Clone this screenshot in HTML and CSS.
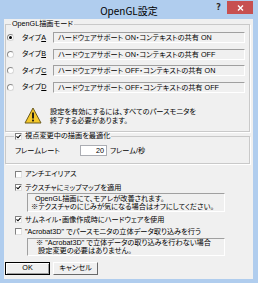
FILE: index.html
```html
<!DOCTYPE html>
<html lang="ja">
<head>
<meta charset="utf-8">
<title>OpenGL設定</title>
<link rel="stylesheet" href="styles.css">
</head>
<body>
<div class="window">
  <div class="titlebar">
    <div class="title">OpenGL設定</div>
    <div class="caption-btns"><span class="help">?</span><span class="close"><svg width="7" height="6" viewBox="0 0 7 6"><path d="M1 0.5 L6 5.5 M6 0.5 L1 5.5" stroke="#fff" stroke-width="1.4"/></svg></span></div>
  </div>
  <div class="client">
    <fieldset class="group mode-group">
      <legend>OpenGL描画モード</legend>
      <div class="modes">
        <div class="mode-row"><span class="radio on"></span><span class="mode-label">タイプ<u>A</u></span><span class="ro-box">ハードウェアサポート ON・コンテキストの共有 ON</span></div>
        <div class="mode-row"><span class="radio"></span><span class="mode-label">タイプ<u>B</u></span><span class="ro-box">ハードウェアサポート ON・コンテキストの共有 OFF</span></div>
        <div class="mode-row"><span class="radio"></span><span class="mode-label">タイプ<u>C</u></span><span class="ro-box">ハードウェアサポート OFF・コンテキストの共有 ON</span></div>
        <div class="mode-row"><span class="radio"></span><span class="mode-label">タイプ<u>D</u></span><span class="ro-box">ハードウェアサポート OFF・コンテキストの共有 OFF</span></div>
      </div>
      <div class="warn">
        <svg class="warn-icon" width="18" height="17" viewBox="0 0 18 17"><path d="M9 1 L17 16 L1 16 Z" fill="#f4c82a" stroke="#6b5a1e" stroke-width="1" stroke-linejoin="round"/><rect x="8.1" y="5.5" width="1.8" height="6" fill="#111"/><rect x="8.1" y="12.6" width="1.8" height="1.8" fill="#111"/></svg>
        <div class="warn-text"><p>設定を有効にするには、すべてのパースモニタを</p><p>終了する必要があります。</p></div>
      </div>
    </fieldset>
    <fieldset class="group opt-group">
      <legend><span class="check on"><svg width="5" height="5" viewBox="0 0 5 5"><path d="M0.5 2.3 L2 3.8 L4.6 0.9" fill="none" stroke="#000" stroke-width="1.1"/></svg></span>視点変更中の描画を最適化</legend>
      <div class="rate-row"><span class="rate-label">フレームレート</span><span class="edit">20</span><span class="rate-unit">フレーム/秒</span></div>
    </fieldset>
    <div class="check-row r-anti"><span class="check"></span>アンチエイリアス</div>
    <div class="check-row r-mip"><span class="check on"><svg width="5" height="5" viewBox="0 0 5 5"><path d="M0.5 2.3 L2 3.8 L4.6 0.9" fill="none" stroke="#000" stroke-width="1.1"/></svg></span>テクスチャにミップマップを適用</div>
    <div class="note note-mip"><p class="indent">OpenGL描画にて、モアレが改善されます。</p><p>※テクスチャのにじみが気になる場合はオフにしてください。</p></div>
    <div class="check-row r-thumb"><span class="check on"><svg width="5" height="5" viewBox="0 0 5 5"><path d="M0.5 2.3 L2 3.8 L4.6 0.9" fill="none" stroke="#000" stroke-width="1.1"/></svg></span>サムネイル・画像作成時にハードウェアを使用</div>
    <div class="check-row r-acro"><span class="check"></span>&quot;Acrobat3D&quot; でパースモニタの立体データ取り込みを行う</div>
    <div class="note note-acro"><p>※ &quot;Acrobat3D&quot; で立体データの取り込みを行わない場合</p><p class="indent2">設定変更の必要はありません。</p></div>
    <div class="buttons"><button class="btn default">OK</button><button class="btn">キャンセル</button></div>
  </div>
</div>
</body>
</html>
```
FILE: styles.css
```css
* { box-sizing: border-box; margin: 0; padding: 0; }
html, body { width: 258px; height: 283px; overflow: hidden; }
body {
  background: #b0cdee;
  font-family: "Liberation Sans", "Noto Sans CJK JP", sans-serif;
  font-size: 7.2px;
  line-height: 8px;
  color: #000;
  font-feature-settings: "palt" 1;
}
.window { width: 258px; height: 283px; display: flex; flex-direction: column; background: #b0cdee; }

.titlebar { height: 19px; flex: none; display: grid; grid-template-columns: 1fr auto 1fr; }
.title { grid-column: 2; font-family: "Noto Sans CJK JP", sans-serif; font-size: 10px; line-height: 12px; padding-top: 5px; color: #000; font-feature-settings: normal; }
.caption-btns { grid-column: 3; justify-self: end; display: flex; align-items: flex-start; margin-right: 5px; }
.help { font-family: "DejaVu Sans", sans-serif; font-weight: bold; font-size: 8px; line-height: 8px; margin-top: 4px; margin-right: 6px; color: #2b2b2b; }
.close { width: 26px; height: 13px; margin-top: 1px; background: #c75050; display: flex; align-items: center; justify-content: center; }

.client { flex: 1; margin: 0 5px 4px 4px; background: #f0f0f0; padding: 1px 3px 0 1px; display: flex; flex-direction: column; }

.group { border: 1px solid #c9c9c9; box-shadow: 1px 1px 0 #fff; padding: 0; min-inline-size: 0; }
.group legend { padding: 0 1px; line-height: 8px; display: flex; align-items: center; }
.mode-group { height: 112px; }
.mode-group legend { margin-left: 5px; }

.modes { padding-top: 4px; display: flex; flex-direction: column; gap: 5.5px; }
.mode-row { display: flex; align-items: center; height: 11px; }
.radio { width: 7px; height: 7px; margin-left: 1px; border-radius: 50%; border: 1px solid #8c8c8c; border-right-color: #d8d8d8; border-bottom-color: #d8d8d8; background: #fff; display: flex; align-items: center; justify-content: center; flex: none; }
.radio.on::after { content: ""; width: 3px; height: 3px; border-radius: 50%; background: #000; }
.mode-label { width: 31px; margin-left: 8px; flex: none; }
.mode-label u { text-underline-offset: 1px; }
.ro-box { flex: 1; margin-right: 4px; height: 11px; line-height: 9px; padding-left: 4px; border: 1px solid #a0a0a0; border-right-color: #fff; border-bottom-color: #fff; background: #f0f0f0; white-space: nowrap; overflow: hidden; }

.warn { display: flex; align-items: flex-start; margin-top: 13px; padding-left: 18px; }
.warn-icon { flex: none; margin-top: 1px; }
.warn-text { margin-left: 8px; margin-top: 1px; line-height: 9px; }

.opt-group { height: 32px; }
.opt-group legend { margin-left: 8px; }
.check { width: 7px; height: 7px; flex: none; border: 1px solid #808080; border-right-color: #e0e0e0; border-bottom-color: #e0e0e0; background: #fff; display: inline-flex; align-items: center; justify-content: center; }
.opt-group legend .check { margin-right: 3px; }

.rate-row { display: flex; align-items: center; height: 11px; margin-top: 5px; padding-left: 9px; }
.rate-label { width: 65px; flex: none; }
.edit { width: 27px; height: 11px; flex: none; border: 1px solid #abadb3; background: #fff; text-align: right; padding-right: 2px; line-height: 9px; }
.rate-unit { margin-left: 3px; }

.check-row { display: flex; align-items: center; height: 8px; padding-left: 10px; white-space: nowrap; }
.check-row .check { margin-right: 3px; }
.r-anti { margin-top: 6px; }
.r-mip { margin-top: 5.7px; }
.note { margin-left: 22px; width: 198px; border: 1px solid #a0a0a0; border-right-color: #fff; border-bottom-color: #fff; padding: 0.6px 0 0 3px; line-height: 8.2px; white-space: nowrap; }
.note-mip { height: 19px; margin-top: 1.3px; }
.note .indent { padding-left: 4px; }
.r-thumb { margin-top: 4px; }
.r-acro { margin-top: 3.7px; }
.note-acro { height: 18.4px; margin-top: 2.1px; padding: 0 0 0 8px; }
.note .indent2 { padding-left: 2px; }

.buttons { display: flex; gap: 3px; margin-top: 5.5px; padding-left: 0; }
.btn { width: 45px; height: 13px; font: inherit; font-feature-settings: "palt" 1; line-height: 8px; background: #f0f0f0; border: 1px solid; border-color: #fff #696969 #696969 #fff; color: #000; }
.btn.default { border: 1px solid #000; box-shadow: inset 1px 1px 0 #fff, inset -1px -1px 0 #a0a0a0; }
```
